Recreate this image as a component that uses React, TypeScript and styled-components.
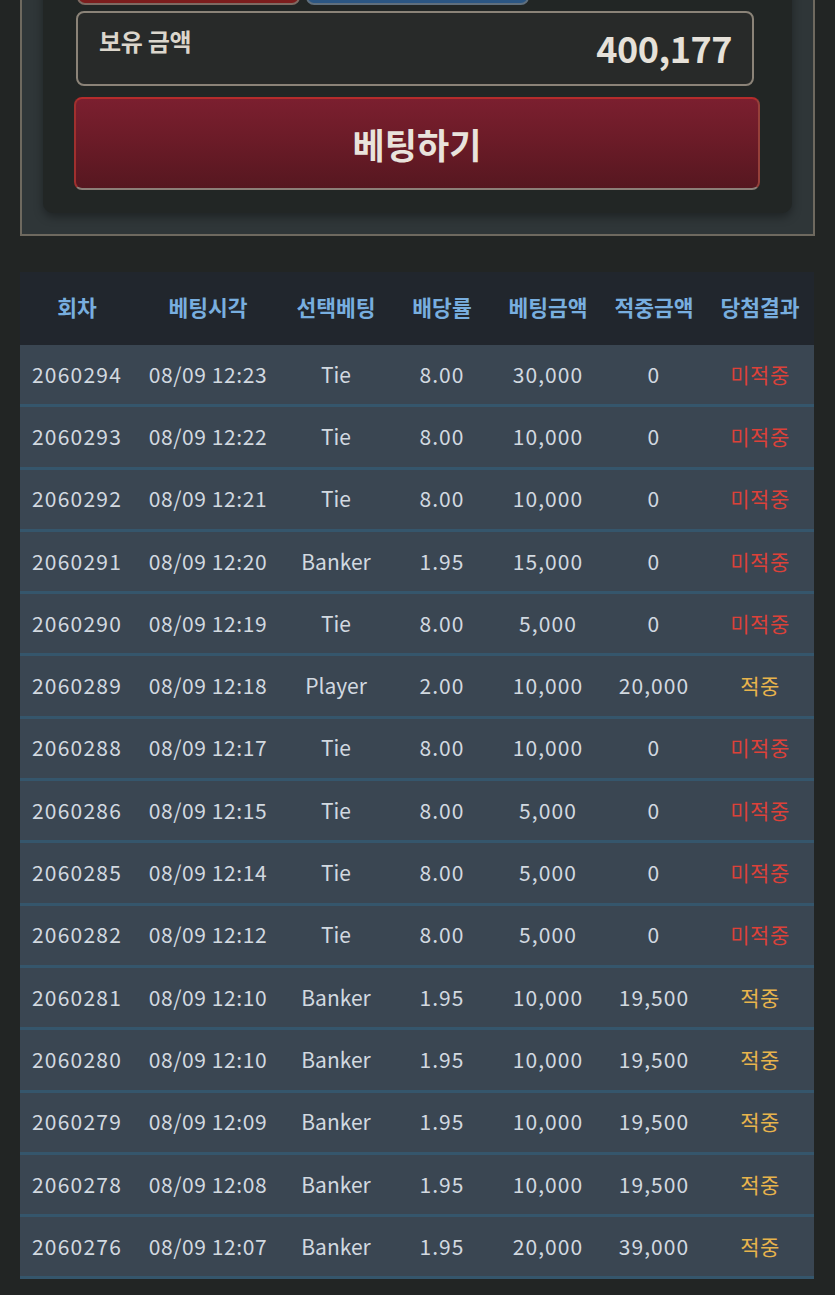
import styled, { createGlobalStyle } from "styled-components";

const GlobalStyle = createGlobalStyle`
    html, body {
        margin: 0;
        padding: 0;
        background: #222524;
    }
    body {
        font-family: "Noto Sans CJK KR", "Noto Sans", sans-serif;
        overflow: hidden;
    }
`;

const Page = styled.div`
    width: 835px;
    padding: 0 20px;
    box-sizing: border-box;
`;

const BetPanel = styled.div`
    margin-top: -70px;
    border: 2px solid #6e695f;
    border-top: none;
    background: #2f3638;
    padding: 0 21px 21px;
`;

const Card = styled.div`
    background: #222625;
    border-radius: 0 0 10px 10px;
    box-shadow: 0 4px 10px rgba(0, 0, 0, 0.35);
    padding: 10px 38px 23px 33px;
`;

const ChoiceRow = styled.div`
    display: flex;
    gap: 6px;
    padding-left: 1px;
`;

const ChoiceButton = styled.div<{ $tone: "red" | "blue" }>`
    width: 223px;
    height: 65px;
    box-sizing: border-box;
    border-radius: 8px;
    border: 2px solid ${(p) => (p.$tone === "red" ? "#7e6a62" : "#5f6f7d")};
    background: ${(p) => (p.$tone === "red" ? "#7c1d1d" : "#2b5683")};
`;

const Balance = styled.div`
    margin-top: 6px;
    height: 75px;
    box-sizing: border-box;
    border: 2px solid #8b8378;
    border-radius: 8px;
    background: #282a29;
    display: flex;
    justify-content: space-between;
    align-items: center;
    padding: 0 20px 4px 21px;
    color: #dcd6cc;
`;

const BalanceLabel = styled.span`
    font-size: 24px;
    font-weight: 700;
    margin-top: -12px;
    letter-spacing: -0.3px;
`;

const BalanceValue = styled.span`
    font-size: 36px;
    font-weight: 700;
    color: #e6e1d9;
    letter-spacing: -0.5px;
`;

const BetButton = styled.button`
    display: block;
    width: calc(100% + 8px);
    margin: 11px -6px 0 -2px;
    height: 93px;
    box-sizing: border-box;
    border: 2px solid #8c7f78;
    border-top-color: #b42c2c;
    border-left-color: #a0302e;
    border-right-color: #96403a;
    border-radius: 8px;
    background: linear-gradient(180deg, #7b1f2f 0%, #6a1b27 50%, #561720 100%);
    color: #e9e3dc;
    font-family: inherit;
    font-size: 35px;
    font-weight: 700;
    cursor: pointer;
`;

const Table = styled.div`
    margin-top: 36px;
    width: 794px;
`;

const columns = "114px 148px 108px 104px 108px 104px 108px";

const HeaderRow = styled.div`
    display: grid;
    grid-template-columns: ${columns};
    height: 73px;
    align-items: center;
    background: #21262d;
`;

const HeaderCell = styled.div`
    text-align: center;
    color: #78aedf;
    font-size: 21.5px;
    font-weight: 700;
    white-space: nowrap;
    padding-bottom: 4px;
`;

const Row = styled.div`
    display: grid;
    grid-template-columns: ${columns};
    height: 62.3px;
    box-sizing: border-box;
    align-items: center;
    background: #3a4652;
    border-bottom: 3px solid #35566c;
    padding-bottom: 2px;
`;

const Cell = styled.div<{ $result?: "win" | "lose"; $spacing: number }>`
    text-align: center;
    font-size: 21px;
    letter-spacing: ${(p) => p.$spacing}px;
    white-space: nowrap;
    color: ${(p) =>
        p.$result === "lose" ? "#dc4139" : p.$result === "win" ? "#e8b44c" : "#d2d9e0"};
`;

const headers = ["회차", "베팅시각", "선택베팅", "배당률", "베팅금액", "적중금액", "당첨결과"];

// letter spacing per column: the digits in the shot run wider than the letters
const spacings = [1.2, 0.6, 0, 1, 1.1, 1.1, 0.5];

const bets = [
    ["2060294", "08/09 12:23", "Tie", "8.00", "30,000", "0", "미적중"],
    ["2060293", "08/09 12:22", "Tie", "8.00", "10,000", "0", "미적중"],
    ["2060292", "08/09 12:21", "Tie", "8.00", "10,000", "0", "미적중"],
    ["2060291", "08/09 12:20", "Banker", "1.95", "15,000", "0", "미적중"],
    ["2060290", "08/09 12:19", "Tie", "8.00", "5,000", "0", "미적중"],
    ["2060289", "08/09 12:18", "Player", "2.00", "10,000", "20,000", "적중"],
    ["2060288", "08/09 12:17", "Tie", "8.00", "10,000", "0", "미적중"],
    ["2060286", "08/09 12:15", "Tie", "8.00", "5,000", "0", "미적중"],
    ["2060285", "08/09 12:14", "Tie", "8.00", "5,000", "0", "미적중"],
    ["2060282", "08/09 12:12", "Tie", "8.00", "5,000", "0", "미적중"],
    ["2060281", "08/09 12:10", "Banker", "1.95", "10,000", "19,500", "적중"],
    ["2060280", "08/09 12:10", "Banker", "1.95", "10,000", "19,500", "적중"],
    ["2060279", "08/09 12:09", "Banker", "1.95", "10,000", "19,500", "적중"],
    ["2060278", "08/09 12:08", "Banker", "1.95", "10,000", "19,500", "적중"],
    ["2060276", "08/09 12:07", "Banker", "1.95", "20,000", "39,000", "적중"],
];

function App() {
    return (
        <Page>
            <GlobalStyle />
            <BetPanel>
                <Card>
                    <ChoiceRow>
                        <ChoiceButton $tone="red" />
                        <ChoiceButton $tone="blue" />
                    </ChoiceRow>
                    <Balance>
                        <BalanceLabel>보유 금액</BalanceLabel>
                        <BalanceValue>400,177</BalanceValue>
                    </Balance>
                    <BetButton>베팅하기</BetButton>
                </Card>
            </BetPanel>
            <Table>
                <HeaderRow>
                    {headers.map((h) => (
                        <HeaderCell key={h}>{h}</HeaderCell>
                    ))}
                </HeaderRow>
                {bets.map((bet) => (
                    <Row key={bet[0]}>
                        {bet.map((value, index) => (
                            <Cell
                                key={index}
                                $spacing={spacings[index]}
                                $result={index === 6 ? (value === "적중" ? "win" : "lose") : undefined}
                            >
                                {value}
                            </Cell>
                        ))}
                    </Row>
                ))}
            </Table>
        </Page>
    );
}

export default App;
